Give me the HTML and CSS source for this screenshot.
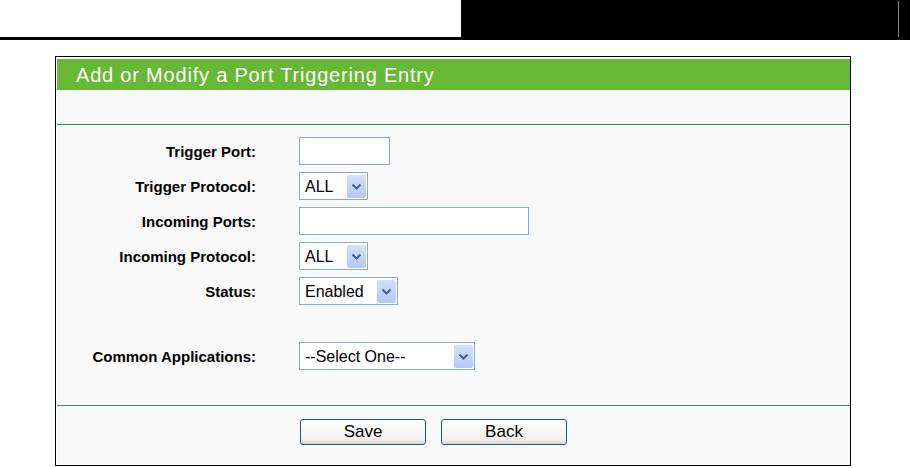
FILE: index.html
```html
<!DOCTYPE html>
<html lang="en">
<head>
    <meta charset="UTF-8">
    <title>Add or Modify a Port Triggering Entry</title>
    <link rel="stylesheet" href="styles.css">
</head>
<body>
    <div class="topbar">
        <div class="topbar-left"></div>
        <div class="topbar-right"><span class="topbar-tick"></span></div>
    </div>

    <div class="panel">
        <div class="panel-title">Add or Modify a Port Triggering Entry</div>
        <div class="panel-blank"></div>

        <div class="panel-form">
            <label>Trigger Port:</label>
            <input type="text" class="field field-port">

            <label>Trigger Protocol:</label>
            <span class="select select-proto"><span class="select-value">ALL</span><span class="select-arrow"><svg width="19" height="23" viewBox="0 0 19 23"><path d="M5.5 9.5 L9.5 13.5 L13.5 9.5" fill="none" stroke="#4b5f86" stroke-width="2"/></svg></span></span>

            <label>Incoming Ports:</label>
            <input type="text" class="field field-ports">

            <label>Incoming Protocol:</label>
            <span class="select select-proto"><span class="select-value">ALL</span><span class="select-arrow"><svg width="19" height="23" viewBox="0 0 19 23"><path d="M5.5 9.5 L9.5 13.5 L13.5 9.5" fill="none" stroke="#4b5f86" stroke-width="2"/></svg></span></span>

            <label>Status:</label>
            <span class="select select-status"><span class="select-value">Enabled</span><span class="select-arrow"><svg width="19" height="23" viewBox="0 0 19 23"><path d="M5.5 9.5 L9.5 13.5 L13.5 9.5" fill="none" stroke="#4b5f86" stroke-width="2"/></svg></span></span>

            <div class="spacer"></div>

            <label>Common Applications:</label>
            <span class="select select-apps"><span class="select-value">--Select One--</span><span class="select-arrow"><svg width="19" height="23" viewBox="0 0 19 23"><path d="M5.5 9.5 L9.5 13.5 L13.5 9.5" fill="none" stroke="#4b5f86" stroke-width="2"/></svg></span></span>
        </div>

        <div class="panel-buttons">
            <button class="btn">Save</button>
            <button class="btn">Back</button>
        </div>
    </div>
</body>
</html>
```

FILE: styles.css
```css
body {
    margin: 0;
    background: #fff;
    font-family: "Liberation Sans", Arial, sans-serif;
}
.topbar {
    display: flex;
    height: 37px;
    border-bottom: 3px solid #000;
}
.topbar-left {
    width: 461px;
}
.topbar-right {
    flex: 1;
    background: #000;
    display: flex;
    justify-content: flex-end;
    padding: 1px 11px 0 0;
}
.topbar-tick {
    width: 1px;
    height: 36px;
    background: #808080;
}
.panel {
    box-sizing: border-box;
    width: 796px;
    margin: 16px 0 0 55px;
    border: 1px solid #000;
    padding: 2px 0 0 1px;
    background: #fff;
}
.panel-title {
    background: #67b834;
    color: #fff;
    font-size: 20px;
    letter-spacing: 0.8px;
    line-height: 28px;
    height: 31px;
    box-sizing: border-box;
    padding: 2px 0 0 19px;
}
.panel-blank {
    height: 34px;
    background: #f9f9f9;
    border-bottom: 1px solid #3c8b5d;
    box-shadow: 0 1px 0 #b6d7c0;
}
.panel-form {
    display: grid;
    grid-template-columns: 199px auto;
    column-gap: 43px;
    row-gap: 7px;
    align-items: center;
    justify-items: start;
    background: #f9f9f9;
    padding: 12px 0 35px;
    border-bottom: 1px solid #3c8b5d;
    box-shadow: 0 1px 0 #b6d7c0;
}
.panel-form label {
    justify-self: end;
    font-weight: bold;
    font-size: 15px;
    color: #000;
}
.field {
    box-sizing: border-box;
    height: 28px;
    margin: 0;
    border: 1px solid #8fa9c4;
    background: #fff;
    font: 16px "Liberation Sans", Arial, sans-serif;
}
.field-port {
    width: 91px;
}
.field-ports {
    width: 230px;
}
.spacer {
    grid-column: 1 / 3;
    height: 23px;
}
.select {
    box-sizing: border-box;
    display: flex;
    align-items: center;
    height: 28px;
    border: 1px solid #8fa9c4;
    background: #fff;
    padding: 2px 1px 1px 0;
    font-size: 16px;
    color: #000;
}
.select-value {
    flex: 1;
    padding-left: 5px;
}
.select-arrow {
    display: flex;
    width: 19px;
    height: 23px;
    border-radius: 2px;
    background: linear-gradient(#d3e0fb, #b3c8f6);
}
.select-proto {
    width: 69px;
}
.select-status {
    width: 99px;
}
.select-apps {
    width: 176px;
}
.panel-buttons {
    display: flex;
    gap: 15px;
    background: #f9f9f9;
    padding: 13px 0 20px 243px;
}
.btn {
    width: 126px;
    height: 26px;
    padding: 0;
    border: 1px solid #245088;
    border-radius: 3px;
    background: linear-gradient(#ffffff, #f2f1ec 80%, #dcd8cf);
    font: 17px "Liberation Sans", Arial, sans-serif;
    color: #000;
}
```
